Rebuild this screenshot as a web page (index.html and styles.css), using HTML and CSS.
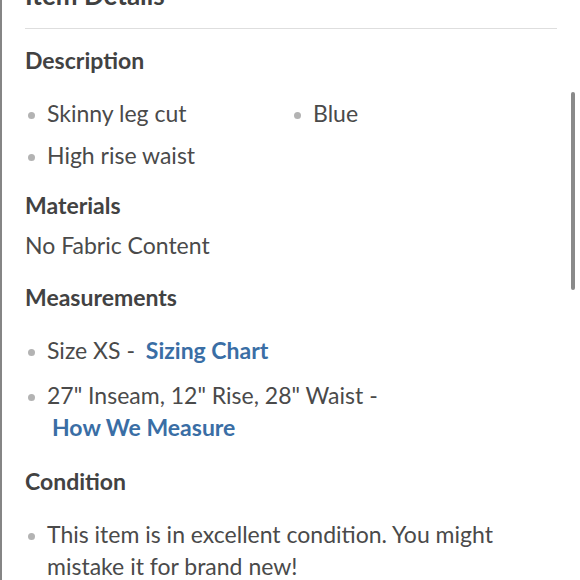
FILE: index.html
```html
<!DOCTYPE html>
<html lang="en">
<head>
<meta charset="utf-8">
<title>Item Details</title>
<link rel="stylesheet" href="styles.css">
</head>
<body>
<div class="frame">
  <div class="details">
    <h2 class="title">Item Details</h2>
    <section class="section">
      <h3 class="heading">Description</h3>
      <ul class="list list-cols">
        <li class="item"><span>Skinny leg cut</span></li>
        <li class="item"><span>Blue</span></li>
        <li class="item"><span>High rise waist</span></li>
      </ul>
    </section>
    <section class="section section-tight">
      <h3 class="heading">Materials</h3>
      <p class="text">No Fabric Content</p>
    </section>
    <section class="section">
      <h3 class="heading">Measurements</h3>
      <ul class="list">
        <li class="item"><span>Size XS - <a class="link" href="#">Sizing Chart</a></span></li>
        <li class="item"><span>27" Inseam, 12" Rise, 28" Waist - <a class="link" href="#">How We Measure</a></span></li>
      </ul>
    </section>
    <section class="section section-loose">
      <h3 class="heading">Condition</h3>
      <ul class="list">
        <li class="item"><span>This item is in excellent condition. You might mistake it for brand new!</span></li>
      </ul>
    </section>
  </div>
  <div class="scrollbar"></div>
</div>
</body>
</html>
```
FILE: styles.css
```css
* { box-sizing: border-box; }
html, body { margin: 0; padding: 0; background: #fff; }
body {
  font-family: "Lato", "Open Sans", sans-serif;
  color: #4a4a4a;
  height: 580px;
  overflow: hidden;
}
.frame {
  position: relative;
  display: flow-root;
  height: 580px;
  border-left: 2px solid #858585;
}
.details {
  padding: 0 23px;
}
.title {
  margin: -21px 0 15px;
  padding-bottom: 17px;
  border-bottom: 1px solid #dedede;
  font-size: 26px;
  line-height: 32px;
  font-weight: 700;
  color: #404040;
}
.section { margin: 0; }
.section + .section { margin-top: 20px; }
.section + .section-tight { margin-top: 18px; }
.section + .section-loose { margin-top: 22px; }
.heading {
  margin: 0;
  font-size: 23px;
  line-height: 32px;
  font-weight: 700;
  color: #424242;
}
.text {
  margin: 0;
  padding-top: 8px;
  font-size: 23px;
  line-height: 32px;
}
.list {
  list-style: none;
  margin: 0;
  padding: 21px 0 0;
  display: flex;
  flex-direction: column;
  gap: 13px;
}
.list-cols {
  display: grid;
  grid-template-columns: 1fr 1fr;
  gap: 10px 0;
}
.item {
  display: flex;
  align-items: flex-start;
  gap: 12px;
  font-size: 23px;
  line-height: 32px;
}
.item::before {
  content: "";
  flex: none;
  width: 7px;
  height: 7px;
  margin: 15px 0 0 3px;
  border-radius: 50%;
  background: #b3b3b3;
}
.link {
  color: #3a6ea5;
  font-weight: 700;
  text-decoration: none;
  white-space: nowrap;
  margin-left: 5px;
}
.scrollbar {
  position: absolute;
  top: 92px;
  right: 5px;
  width: 4px;
  height: 198px;
  border-radius: 2px;
  background: #8a8a8a;
}
```
